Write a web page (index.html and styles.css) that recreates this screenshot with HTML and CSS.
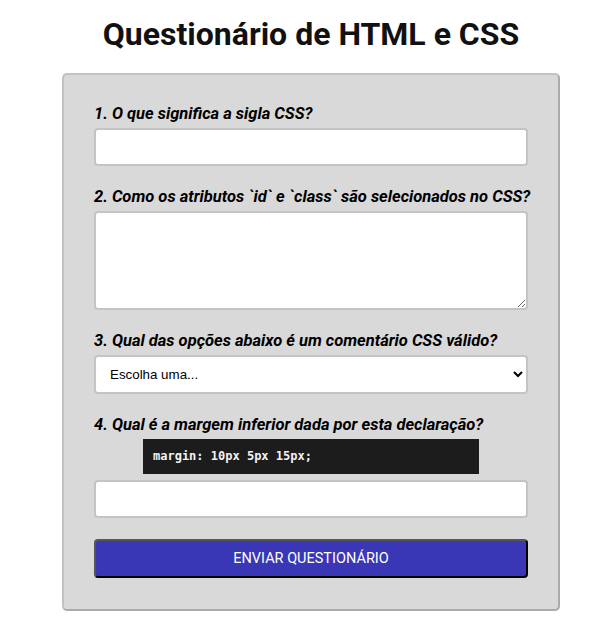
FILE: index.html
```html
<!DOCTYPE html>
<html lang="pt-BR">
<head>
    <meta charset="UTF-8">
    <meta name="viewport" content="width=device-width, initial-scale=1.0">
    <title>Questionário de HTML e CSS</title>
    <link rel="stylesheet" href="styles.css">
</head>
<body>

    <h1>Questionário de HTML e CSS</h1>

    <form class="quiz">
        <!-- Pergunta 1 -->
        <div class="question">
            <label for="q1">1. O que significa a sigla CSS?</label>
            <input type="text" id="q1" name="q1">
        </div>

        <!-- Pergunta 2 -->
        <div class="question">
            <label for="q2">2. Como os atributos `id` e `class` são selecionados no CSS?</label>
            <textarea id="q2" name="q2"></textarea>
        </div>

        <!-- Pergunta 3 -->
        <div class="question">
            <label for="q3">3. Qual das opções abaixo é um comentário CSS válido?</label>
            <select id="q3" name="q3">
                <option value="">Escolha uma...</option>
                <option value="a">// comentário</option>
                <option value="b">/* comentário */</option>
                <option value="c">&lt;!-- comentário --&gt;</option>
            </select>
        </div>

        <!-- Pergunta 4 -->
        <div class="question">
            <label for="q4">4. Qual é a margem inferior dada por esta declaração?</label>
            <pre class="code">margin: 10px 5px 15px;</pre>
            <input type="text" id="q4" name="q4">
        </div>

        <button type="submit" class="submit">ENVIAR QUESTIONÁRIO</button>
    </form>

</body>
</html>
```

FILE: styles.css
```css
body {
    margin: 0;
    padding: 0 0 20px 12px;
    font-family: Roboto, "Liberation Sans", sans-serif;
    background-color: #fff;
    color: #111;
}

h1 {
    margin: 15px 0 20px;
    font-size: 32px;
    font-weight: 700;
    text-align: center;
}

/* Caixa do formulário */
.quiz {
    width: 434px;
    margin: 0 auto;
    padding: 29px 30px 31px;
    background-color: #d9d9d9;
    border: 2px solid;
    border-color: #c2c2c2 #aaa #aaa #c2c2c2;
    border-radius: 5px;
}

.question {
    margin-bottom: 21px;
}

.question label {
    display: block;
    margin-bottom: 5px;
    font-size: 16.5px;
    font-weight: 700;
    font-style: italic;
    white-space: nowrap;
    color: #000;
}

.question input,
.question textarea,
.question select {
    display: block;
    box-sizing: border-box;
    width: 100%;
    margin: 0;
    border: 2px solid #c4c4c4;
    border-radius: 4px;
    background-color: #fff;
}

.question input {
    height: 38px;
    padding: 0 10px;
}

.question textarea {
    height: 99px;
    padding: 8px 10px;
}

.question select {
    height: 39px;
    padding: 0 10px;
    font-family: "Liberation Sans", Arial, sans-serif;
    font-size: 13.33px;
    color: #000;
}

/* Bloco de código */
.code {
    width: 316px;
    margin: 3px auto 6px;
    padding: 10px;
    background-color: #1c1c1c;
    color: #f2f2f2;
    font-family: "DejaVu Sans Mono", monospace;
    font-size: 12px;
    font-weight: 700;
    line-height: 15px;
}

.submit {
    display: block;
    box-sizing: border-box;
    width: 100%;
    height: 39px;
    margin-top: 20px;
    background-color: #3a37b6;
    color: #fff;
    border: 2px solid;
    border-color: #555 #000 #000 #555;
    border-radius: 4px;
    font-family: Roboto, sans-serif;
    font-size: 14.5px;
    cursor: pointer;
}
```
